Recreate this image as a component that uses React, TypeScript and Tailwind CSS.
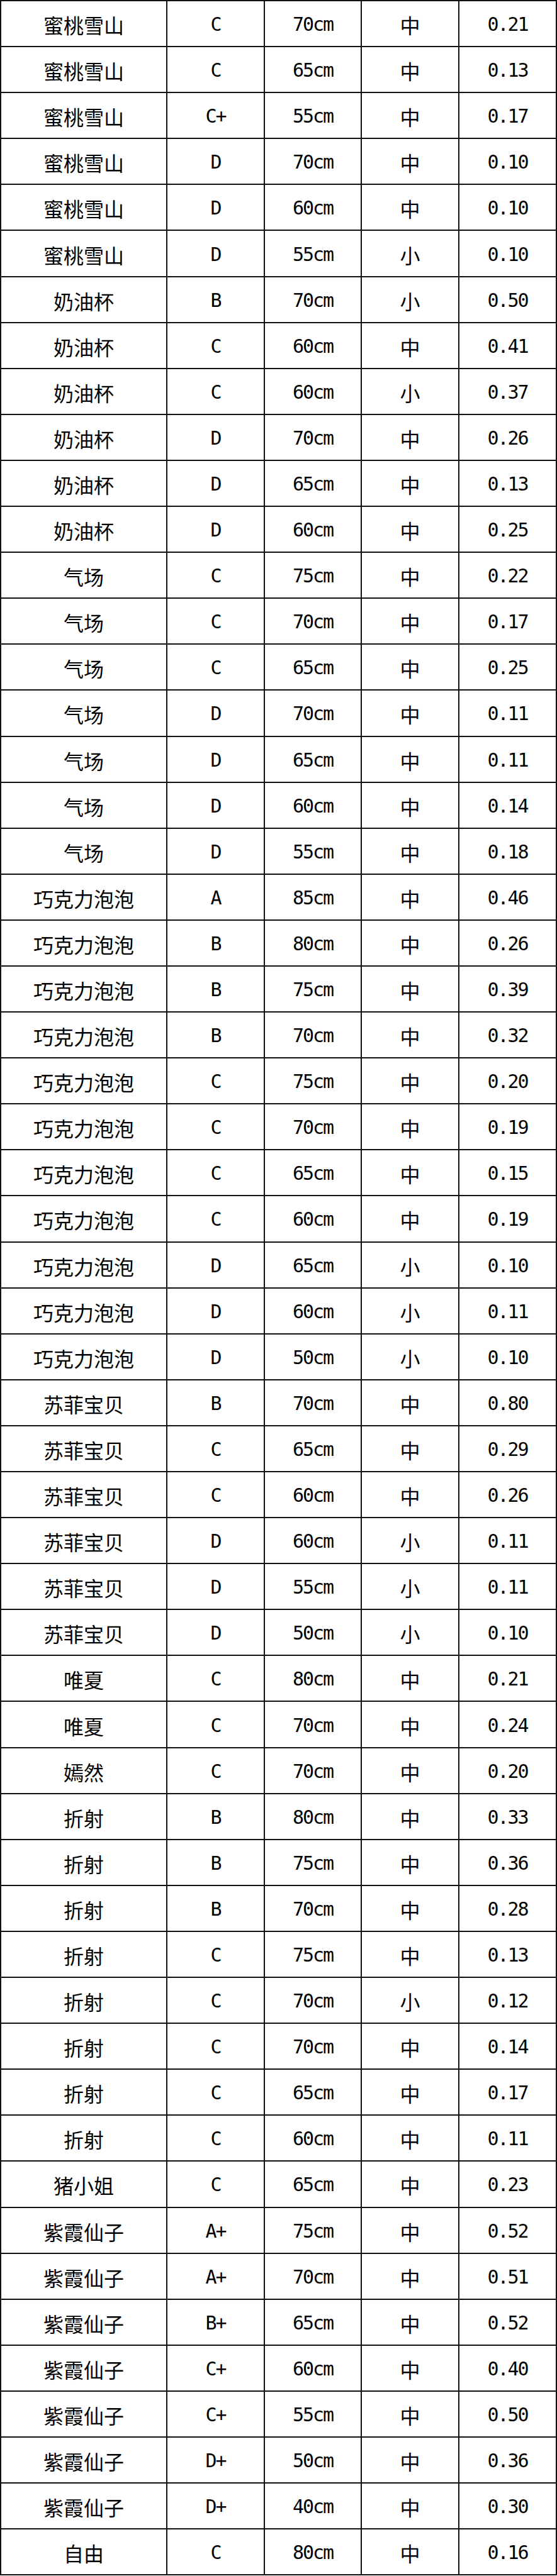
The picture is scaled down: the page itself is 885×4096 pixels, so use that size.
const rows: [string, string, string, string, string][] = [
  ["蜜桃雪山", "C", "70cm", "中", "0.21"],
  ["蜜桃雪山", "C", "65cm", "中", "0.13"],
  ["蜜桃雪山", "C+", "55cm", "中", "0.17"],
  ["蜜桃雪山", "D", "70cm", "中", "0.10"],
  ["蜜桃雪山", "D", "60cm", "中", "0.10"],
  ["蜜桃雪山", "D", "55cm", "小", "0.10"],
  ["奶油杯", "B", "70cm", "小", "0.50"],
  ["奶油杯", "C", "60cm", "中", "0.41"],
  ["奶油杯", "C", "60cm", "小", "0.37"],
  ["奶油杯", "D", "70cm", "中", "0.26"],
  ["奶油杯", "D", "65cm", "中", "0.13"],
  ["奶油杯", "D", "60cm", "中", "0.25"],
  ["气场", "C", "75cm", "中", "0.22"],
  ["气场", "C", "70cm", "中", "0.17"],
  ["气场", "C", "65cm", "中", "0.25"],
  ["气场", "D", "70cm", "中", "0.11"],
  ["气场", "D", "65cm", "中", "0.11"],
  ["气场", "D", "60cm", "中", "0.14"],
  ["气场", "D", "55cm", "中", "0.18"],
  ["巧克力泡泡", "A", "85cm", "中", "0.46"],
  ["巧克力泡泡", "B", "80cm", "中", "0.26"],
  ["巧克力泡泡", "B", "75cm", "中", "0.39"],
  ["巧克力泡泡", "B", "70cm", "中", "0.32"],
  ["巧克力泡泡", "C", "75cm", "中", "0.20"],
  ["巧克力泡泡", "C", "70cm", "中", "0.19"],
  ["巧克力泡泡", "C", "65cm", "中", "0.15"],
  ["巧克力泡泡", "C", "60cm", "中", "0.19"],
  ["巧克力泡泡", "D", "65cm", "小", "0.10"],
  ["巧克力泡泡", "D", "60cm", "小", "0.11"],
  ["巧克力泡泡", "D", "50cm", "小", "0.10"],
  ["苏菲宝贝", "B", "70cm", "中", "0.80"],
  ["苏菲宝贝", "C", "65cm", "中", "0.29"],
  ["苏菲宝贝", "C", "60cm", "中", "0.26"],
  ["苏菲宝贝", "D", "60cm", "小", "0.11"],
  ["苏菲宝贝", "D", "55cm", "小", "0.11"],
  ["苏菲宝贝", "D", "50cm", "小", "0.10"],
  ["唯夏", "C", "80cm", "中", "0.21"],
  ["唯夏", "C", "70cm", "中", "0.24"],
  ["嫣然", "C", "70cm", "中", "0.20"],
  ["折射", "B", "80cm", "中", "0.33"],
  ["折射", "B", "75cm", "中", "0.36"],
  ["折射", "B", "70cm", "中", "0.28"],
  ["折射", "C", "75cm", "中", "0.13"],
  ["折射", "C", "70cm", "小", "0.12"],
  ["折射", "C", "70cm", "中", "0.14"],
  ["折射", "C", "65cm", "中", "0.17"],
  ["折射", "C", "60cm", "中", "0.11"],
  ["猪小姐", "C", "65cm", "中", "0.23"],
  ["紫霞仙子", "A+", "75cm", "中", "0.52"],
  ["紫霞仙子", "A+", "70cm", "中", "0.51"],
  ["紫霞仙子", "B+", "65cm", "中", "0.52"],
  ["紫霞仙子", "C+", "60cm", "中", "0.40"],
  ["紫霞仙子", "C+", "55cm", "中", "0.50"],
  ["紫霞仙子", "D+", "50cm", "中", "0.36"],
  ["紫霞仙子", "D+", "40cm", "中", "0.30"],
  ["自由", "C", "80cm", "中", "0.16"],
];

const cell =
  "flex h-[73.1px] items-center justify-center border-r-2 border-b-2 border-[#111] pt-[3px] text-black";
const cjk =
  "font-['Noto_Sans_CJK_SC','Noto_Sans',sans-serif] text-[32px] leading-none";
const latin =
  "font-['DejaVu_Sans_Mono','Liberation_Mono',monospace] text-[30px] leading-none tracking-[-2px]";

export default function App() {
  return (
    <div className="min-h-screen w-[885px] bg-white">
      <div className="grid grid-cols-[264px_155px_154px_155px_155px] border-t-2 border-l-2 border-[#111]">
        {rows.map(([name, grade, size, kind, price], i) => (
          <div key={i} className="contents">
            <div className={`${cell} ${cjk}`}>{name}</div>
            <div className={`${cell} ${latin}`}>{grade}</div>
            <div className={`${cell} ${latin}`}>{size}</div>
            <div className={`${cell} ${cjk}`}>{kind}</div>
            <div className={`${cell} ${latin}`}>{price}</div>
          </div>
        ))}
      </div>
    </div>
  );
}
